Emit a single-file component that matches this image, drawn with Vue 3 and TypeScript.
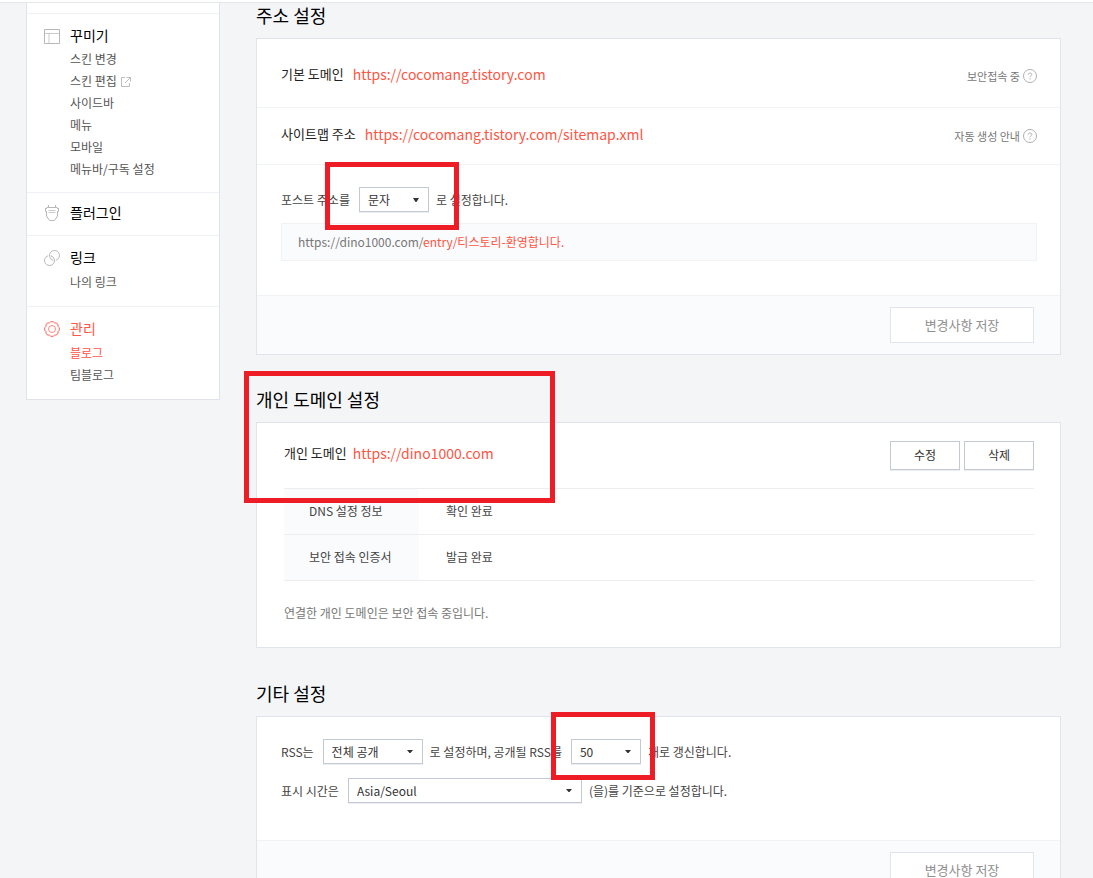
<script setup lang="ts">
import { ref } from 'vue'

interface MenuItem {
  label: string
  active?: boolean
  external?: boolean
}
interface MenuGroup {
  icon: 'layout' | 'plug' | 'link' | 'gear'
  title: string
  active?: boolean
  items: MenuItem[]
}

const groups: MenuGroup[] = [
  {
    icon: 'layout',
    title: '꾸미기',
    items: [
      { label: '스킨 변경' },
      { label: '스킨 편집', external: true },
      { label: '사이드바' },
      { label: '메뉴' },
      { label: '모바일' },
      { label: '메뉴바/구독 설정' },
    ],
  },
  { icon: 'plug', title: '플러그인', items: [] },
  { icon: 'link', title: '링크', items: [{ label: '나의 링크' }] },
  {
    icon: 'gear',
    title: '관리',
    active: true,
    items: [{ label: '블로그', active: true }, { label: '팀블로그' }],
  },
]

const addresses = [
  { label: '기본 도메인', url: 'https://cocomang.tistory.com', help: '보안접속 중' },
  { label: '사이트맵 주소', url: 'https://cocomang.tistory.com/sitemap.xml', help: '자동 생성 안내' },
]

const status = [
  { name: 'DNS 설정 정보', value: '확인 완료' },
  { name: '보안 접속 인증서', value: '발급 완료' },
]

const postType = ref('문자')
const rssScope = ref('전체 공개')
const rssCount = ref('50')
const timezone = ref('Asia/Seoul')
</script>

<template>
  <div class="page">
    <div class="topbar"></div>
    <div class="layout">
      <nav class="sidebar">
        <div class="stub"></div>
        <section v-for="g in groups" :key="g.title" class="group" :class="[`group-${g.icon}`, { active: g.active }]">
          <a href="#" class="title">
            <svg v-if="g.icon === 'layout'" class="icon" viewBox="0 0 16 16">
              <path d="M.5 1.5h15v14H.5z" />
              <path class="faint" d="M1 5.5h14M5 6v9" />
            </svg>
            <svg v-else-if="g.icon === 'plug'" class="icon" viewBox="0 0 16 16">
              <path d="M4.5 0v2.500M11.500 0v2.500M2.500 2.500h11M1 3.500h2M13 3.500h2M1.500 3v3.500M14.500 3v3.500M1.500 6.500h1v4.500l3 4.500h5l3-4.500v-4.500h1" />
              <path class="faint" d="M4.500 5.500h7M4.500 7.500h7" />
            </svg>
            <svg v-else-if="g.icon === 'link'" class="icon" viewBox="0 0 16 16">
              <path d="M9.200 10.300A5 5 0 1 1 11.800 10.300M6.800 5.700A5 5 0 1 1 4.200 5.700" />
            </svg>
            <svg v-else class="icon" viewBox="0 0 16 16">
              <path d="M5.500 1.900A3 3 0 0 1 10.500 1.900A3 3 0 0 1 14.100 5.500A3 3 0 0 1 14.100 10.500A3 3 0 0 1 10.500 14.100A3 3 0 0 1 5.500 14.100A3 3 0 0 1 1.900 10.500A3 3 0 0 1 1.900 5.500A3 3 0 0 1 5.500 1.900Z" />
              <circle class="faint" cx="8" cy="8" r="3.500" />
            </svg>
            <span>{{ g.title }}</span>
          </a>
          <ul v-if="g.items.length">
            <li v-for="i in g.items" :key="i.label">
              <a href="#" :class="{ active: i.active }">{{ i.label }}</a>
              <svg v-if="i.external" class="external" viewBox="0 0 10 10">
                <path d="M4 .5H.5v9h8V6M5.500.5h4v4M9.500.5 4 6" />
              </svg>
            </li>
          </ul>
        </section>
      </nav>

      <main class="content">
        <section class="block">
          <h2>주소 설정</h2>
          <div class="panel">
            <div v-for="a in addresses" :key="a.label" class="address">
              <span class="label">{{ a.label }}</span>
              <a href="#" class="url">{{ a.url }}</a>
              <button type="button" class="help">
                {{ a.help }}
                <svg viewBox="0 0 14 14">
                  <circle cx="7" cy="7" r="6.500" />
                  <path d="M5.200 5.700C5.200 3.400 8.800 3.500 8.800 5.500C8.800 6.800 7 6.700 7 8.300M7 9.300v1.200" />
                </svg>
              </button>
            </div>
            <div class="form">
              <div class="line">
                <label for="post-type">포스트 주소를</label>
                <div class="picker short">
                  <select id="post-type" v-model="postType">
                    <option>문자</option>
                    <option>숫자</option>
                  </select>
                  <svg viewBox="0 0 6 6"><path d="M0 1h6L3.500 5h-1z" /></svg>
                  <span class="mark mark-post"></span>
                </div>
                <span>로 설정합니다.</span>
              </div>
              <p class="sample">https://dino1000.com/<em>entry/티스토리-환영합니다.</em></p>
            </div>
            <div class="footer"><button type="button" class="save">변경사항 저장</button></div>
          </div>
        </section>

        <section class="block">
          <h2>개인 도메인 설정</h2>
          <div class="panel domain">
            <div class="domain-head">
              <span class="label">개인 도메인</span>
              <a href="#" class="url">https://dino1000.com</a>
              <div class="actions">
                <button type="button">수정</button>
                <button type="button">삭제</button>
              </div>
            </div>
            <table>
              <tbody>
                <tr v-for="s in status" :key="s.name">
                  <th scope="row">{{ s.name }}</th>
                  <td>{{ s.value }}</td>
                </tr>
              </tbody>
            </table>
            <p class="note">연결한 개인 도메인은 보안 접속 중입니다.</p>
          </div>
          <span class="mark mark-domain"></span>
        </section>

        <section class="block">
          <h2>기타 설정</h2>
          <div class="panel">
            <div class="form etc">
              <div class="line">
                <label for="rss-scope">RSS는</label>
                <div class="picker medium">
                  <select id="rss-scope" v-model="rssScope">
                    <option>전체 공개</option>
                    <option>비공개</option>
                  </select>
                  <svg viewBox="0 0 6 6"><path d="M0 1h6L3.500 4h-1z" /></svg>
                </div>
                <label for="rss-count">로 설정하며, 공개될 RSS를</label>
                <div class="picker short">
                  <select id="rss-count" v-model="rssCount">
                    <option>10</option>
                    <option>50</option>
                  </select>
                  <svg viewBox="0 0 6 6"><path d="M0 1h6L3.500 4h-1z" /></svg>
                  <span class="mark mark-rss"></span>
                </div>
                <span>개로 갱신합니다.</span>
              </div>
              <div class="line">
                <label for="timezone">표시 시간은</label>
                <div class="picker long">
                  <select id="timezone" v-model="timezone">
                    <option>Asia/Seoul</option>
                    <option>Asia/Tokyo</option>
                  </select>
                  <svg viewBox="0 0 6 6"><path d="M0 1h6L3.500 4h-1z" /></svg>
                </div>
                <span>(을)를 기준으로 설정합니다.</span>
              </div>
            </div>
            <div class="footer"><button type="button" class="save">변경사항 저장</button></div>
          </div>
        </section>
      </main>
    </div>
  </div>
</template>

<style>
body {
  margin: 0;
  background: #f3f5f7;
}
</style>

<style scoped>
.page {
  height: 100vh;
  overflow: hidden;
  background: #f3f5f7;
  color: #444;
  font-family: 'Noto Sans CJK KR', 'Noto Sans', sans-serif;
  font-size: 12px;
  line-height: 24px;
}
* {
  box-sizing: border-box;
}
a {
  color: inherit;
  text-decoration: none;
}
button,
select {
  margin: 0;
  font-family: inherit;
}
.topbar {
  height: 3px;
  background: #fff;
  border-bottom: 1px solid #e5e7ec;
}
.layout {
  display: flex;
  align-items: flex-start;
  gap: 36px;
  padding: 0 32px 0 26px;
}

/* sidebar */
.sidebar {
  flex: 0 0 194px;
  background: #fff;
  border: 1px solid #e0e3ed;
  border-top: 0;
}
.stub {
  height: 10px;
}
.group {
  padding: 9px 17px 13px;
  border-top: 1px solid #f0f1f6;
}
.group-layout {
  padding-bottom: 12px;
}
.group-layout ul {
  margin-top: 1px;
}
.group-plug {
  padding-top: 7px;
  padding-bottom: 11px;
}
.title {
  display: flex;
  align-items: center;
  gap: 10px;
  color: #000;
  font-size: 14px;
}
.icon {
  width: 16px;
  height: 16px;
  margin-top: 2px;
  fill: none;
  stroke: #b8b8b8;
}
.faint {
  opacity: 0.75;
}
.active .icon {
  stroke: #ff6455;
}
.active > .title,
a.active {
  color: #ff5544;
}
ul {
  margin: 2px 0 0 26px;
  padding: 0;
  list-style: none;
  color: #555;
  line-height: 22px;
}
li {
  display: flex;
  align-items: center;
  gap: 4px;
}
.external {
  width: 10px;
  height: 10px;
  margin-top: 2px;
  fill: none;
  stroke: #bdbdbd;
}

/* content */
.content {
  flex: 1;
  min-width: 0;
  padding-top: 1px;
}
.block {
  position: relative;
  margin-bottom: 33px;
}
h2 {
  margin: 0;
  padding-bottom: 12px;
  color: #000;
  font-size: 18px;
  font-weight: 400;
  line-height: 22px;
}
.panel {
  background: #fff;
  border: 1px solid #e0e4ec;
}
.label {
  color: #222;
  font-size: 13px;
}
.url {
  color: #ff5544;
  font-size: 14px;
}
.address {
  display: flex;
  align-items: flex-start;
  gap: 9px;
  padding: 14px 23px 14px 24px;
  border-bottom: 1px solid #f1f3f6;
}
.address:first-child {
  padding-top: 23px;
  padding-bottom: 17px;
}
.help {
  display: flex;
  align-items: center;
  gap: 3px;
  margin-left: auto;
  padding: 0;
  border: 0;
  background: none;
  color: #777;
  font-size: 11px;
  line-height: 28px;
}
.help svg {
  width: 14px;
  height: 14px;
  fill: none;
  stroke: #b0b0b0;
}
.form {
  padding: 22px 23px 34px 24px;
}
.form.etc {
  padding-bottom: 37px;
}
.line {
  display: flex;
  align-items: center;
  gap: 7px;
  line-height: 25px;
}
.line label {
  padding-right: 2px;
}
.line + .line {
  margin-top: 14px;
}
.picker {
  position: relative;
  height: 25px;
}
.short {
  width: 70px;
}
.medium {
  width: 100px;
}
.long {
  width: 234px;
}
select {
  display: block;
  width: 100%;
  height: 25px;
  padding: 0 20px 0 8px;
  border: 1px solid #c3cad4;
  border-radius: 0;
  background: #fff;
  box-shadow: 0 1px 0 #eceef1;
  color: #333;
  font-size: 12px;
  appearance: none;
}
.picker svg {
  position: absolute;
  top: 10px;
  right: 10px;
  width: 6px;
  height: 6px;
  fill: #333;
  pointer-events: none;
}
.sample {
  margin: 11px 0 0;
  padding: 0 16px;
  border: 1px solid #f0f2f5;
  background: #fafbfd;
  color: #777;
  line-height: 36px;
}
.sample em {
  color: #ff5544;
  font-style: normal;
}
.footer {
  display: flex;
  justify-content: flex-end;
  padding: 11px 26px;
  border-top: 1px solid #f0f2f5;
  background: #fafbfd;
}
.save {
  width: 144px;
  height: 36px;
  padding: 0 0 2px;
  border: 1px solid #e0e4ec;
  background: #fff;
  color: #909090;
  font-size: 13px;
}

/* custom domain */
.domain {
  margin-bottom: 34px;
  padding: 18px 26px 24px 27px;
}
.domain-head {
  display: flex;
  gap: 6px;
  margin-bottom: 18px;
}
.actions {
  display: flex;
  gap: 4px;
  margin-left: auto;
}
.actions button {
  width: 70px;
  height: 29px;
  padding: 0 0 2px;
  border: 1px solid #c3cad4;
  background: #fff;
  box-shadow: 0 1px 0 #eceef1;
  color: #333;
  font-size: 12px;
}
table {
  width: 100%;
  border-collapse: collapse;
}
tr {
  height: 46px;
  border-top: 1px solid #ebedf0;
  border-bottom: 1px solid #ebedf0;
}
th {
  width: 135px;
  padding: 0 0 1px 25px;
  background: #fafbfd;
  font-weight: 400;
  text-align: left;
}
td {
  padding: 0 27px 1px;
}
.note {
  margin: 22px 0 0;
  color: #777;
  line-height: 20px;
}

/* highlight frames laid over the form */
.mark {
  position: absolute;
  z-index: 1;
  border: 5px solid #ee1c25;
  pointer-events: none;
}
.mark-post {
  inset: -25px -30px -18px -34px;
}
.mark-rss {
  inset: -27px -14px -16px -20px;
}
.mark-domain {
  top: -17px;
  left: -12px;
  width: 311px;
  height: 132px;
}
</style>
